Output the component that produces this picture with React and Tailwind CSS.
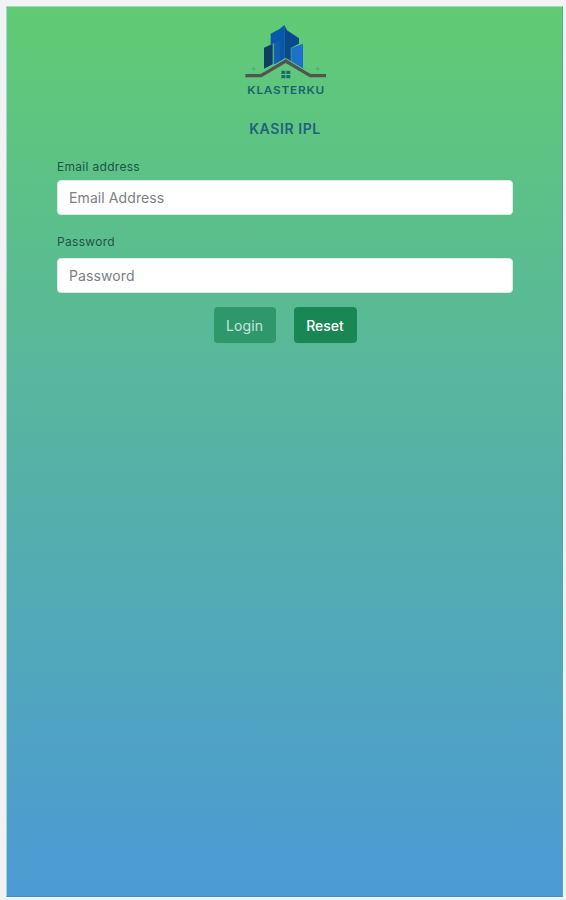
import React, { useState } from 'react';

const Logo = () => (
  <svg viewBox="0 0 300 270" className="h-[90px] w-[100px]" aria-label="Klasterku">
    {/* Towers */}
    <path d="M87 98 L113 86 V148 L87 161 Z" fill="#0d3f66" />
    <path d="M107 56 L135 41 L148 30 V132 L118 148 V85 L107 88 Z" fill="#0757ad" />
    <path d="M148 30 L156 46 L192 70 V86 L169 98 V142 L148 130 Z" fill="#0a4a8c" />
    <path d="M118 84 L134 78 V138 L118 148 Z" fill="#125fae" />
    <path d="M170 99 L204 86 V161 L170 142 Z" fill="#1c71cb" />
    <path d="M116 84 V148 M168 98 V140" stroke="#358e98" strokeWidth="2" fill="none" />
    {/* Roof */}
    <path d="M31 182 H78 L152 138 L226 182 H273" stroke="#51544f" strokeWidth="10" fill="none" />
    <path d="M88 169 L152 130 L216 169" stroke="#64bd85" strokeWidth="3" fill="none" />
    {/* Window */}
    <path d="M139 167h12v10h-12z M154 167h12v10h-12z M139 180h12v10h-12z M154 180h12v10h-12z" fill="#1b6a70" />
    <path d="M50 162h12 M56 156v10 M242 162h12 M248 156v10" stroke="#4da777" strokeWidth="2.5" />
    <text
      x="37"
      y="236"
      textLength="233"
      lengthAdjust="spacingAndGlyphs"
      fontSize="32"
      fontWeight="600"
      letterSpacing="2"
      fill="#1c6272"
      className="font-['Inter',sans-serif]"
    >
      KLASTERKU
    </text>
  </svg>
);

const App = () => {
  const [email, setEmail] = useState('');
  const [password, setPassword] = useState('');

  const handleReset = () => {
    setEmail('');
    setPassword('');
  };

  const labelClass = "block text-[12px] leading-[22px] tracking-[0.3px] text-[#1d5548]";
  const inputClass =
    "block h-[35px] w-full rounded-[4px] border border-[#dcece4] bg-white px-[11px] text-[14px] tracking-[0.1px] text-gray-800 placeholder:text-[#7b8085] outline-none";

  return (
    <div className="h-screen bg-[#f1f2f4] pt-[6px] pr-[3px] pb-[3px] pl-[6px] font-['Inter',sans-serif]">
      <div className="h-full border border-t-[#a5dcb0] border-r-[#4fa9a4] border-b-[#3e90c8] border-l-[#a9d6cc] bg-linear-to-b/srgb from-[#60cb74] to-[#4c9ad5] pr-[49px] pl-[50px]">
        <div className="flex justify-center pt-[8px]">
          <Logo />
        </div>
        <h1 className="mt-[14px] text-center text-[14px] leading-[20px] font-semibold tracking-[0.6px] text-[#20627c]">
          KASIR IPL
        </h1>
        <form onSubmit={(e) => e.preventDefault()}>
          <label htmlFor="email" className={`mt-[17px] ${labelClass}`}>
            Email address
          </label>
          <input
            id="email"
            type="email"
            placeholder="Email Address"
            value={email}
            onChange={(e) => setEmail(e.target.value)}
            className={`mt-[2px] ${inputClass}`}
          />
          <label htmlFor="password" className={`mt-[16px] ${labelClass}`}>
            Password
          </label>
          <input
            id="password"
            type="password"
            placeholder="Password"
            value={password}
            onChange={(e) => setPassword(e.target.value)}
            className={`mt-[5px] ${inputClass}`}
          />
          <div className="mt-[14px] flex justify-center gap-[18px]">
            <button
              type="submit"
              disabled={!email || !password}
              className="h-[36px] w-[62px] rounded-[4px] bg-[#198754] text-[14px] tracking-[0.1px] text-white disabled:opacity-65"
            >
              Login
            </button>
            <button
              type="button"
              onClick={handleReset}
              className="h-[36px] w-[63px] rounded-[4px] bg-[#198754] text-[14px] font-medium text-white"
            >
              Reset
            </button>
          </div>
        </form>
      </div>
    </div>
  );
};

export default App;
